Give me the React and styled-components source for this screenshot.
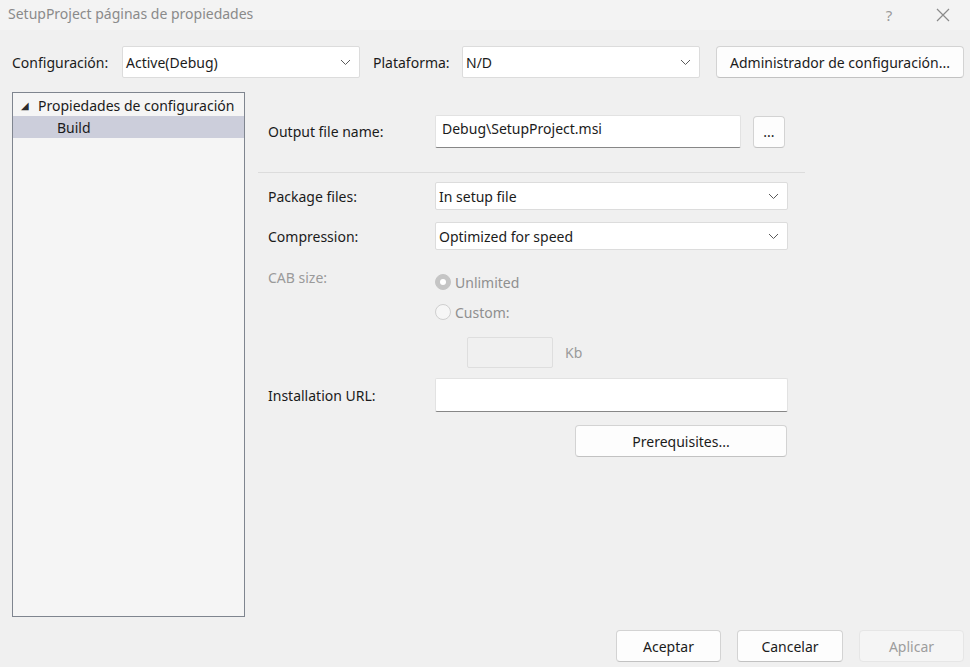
import React from "react";
import styled, { createGlobalStyle } from "styled-components";

const GlobalStyle = createGlobalStyle`
  html, body {
    margin: 0;
    padding: 0;
    background: #f0f0f0;
  }
  body {
    font-family: "Noto Sans", "Open Sans", sans-serif;
    font-size: 14px;
    color: #1b1b1b;
  }
`;

const Window = styled.div`
  width: 970px;
  height: 667px;
  display: flex;
  flex-direction: column;
  background: #f0f0f0;
  overflow: hidden;
`;

const TitleBar = styled.div`
  height: 30px;
  display: flex;
  align-items: center;
  padding: 0 0 0 8px;
  background: #f3f3f3;
`;

const Title = styled.div`
  flex: 1;
  color: #8a8a8a;
  font-size: 14px;
  padding-bottom: 3px;
`;

const TitleButton = styled.div`
  width: 54px;
  height: 30px;
  display: flex;
  align-items: center;
  justify-content: center;
  color: #9a9a9a;
  font-size: 15px;
`;

const Toolbar = styled.div`
  display: flex;
  align-items: center;
  padding: 16px 6px 0 12px;
  height: 32px;
`;

const ToolLabel = styled.span`
  width: ${(p) => p.$w}px;
  flex: none;
  white-space: nowrap;
`;

const SelectBox = styled.div`
  box-sizing: border-box;
  width: ${(p) => p.$w}px;
  height: ${(p) => p.$h || 32}px;
  background: #ffffff;
  border: 1px solid #dcdcdc;
  border-radius: 2px;
  display: flex;
  align-items: center;
  padding: 0 8px 0 3px;
  margin-right: ${(p) => p.$mr || 0}px;
  span {
    flex: 1;
    white-space: nowrap;
  }
`;

const Button = styled.div`
  box-sizing: border-box;
  width: ${(p) => p.$w}px;
  height: ${(p) => p.$h || 32}px;
  background: ${(p) => (p.$disabled ? "#f5f5f5" : "#fdfdfd")};
  color: ${(p) => (p.$disabled ? "#9d9d9d" : "#1b1b1b")};
  border: 1px solid ${(p) => (p.$disabled ? "#e6e6e6" : "#d3d3d3")};
  border-bottom-color: ${(p) => (p.$disabled ? "#e6e6e6" : "#c2c2c2")};
  border-radius: 4px;
  display: flex;
  align-items: center;
  justify-content: center;
  white-space: nowrap;
`;

const Main = styled.div`
  display: flex;
  margin: 14px 0 0 12px;
  height: 525px;
`;

const Tree = styled.div`
  box-sizing: border-box;
  width: 233px;
  height: 100%;
  background: #f5f5f5;
  border: 1px solid #7f858f;
  padding-top: 1px;
`;

const TreeItem = styled.div`
  height: 22px;
  display: flex;
  align-items: center;
  padding-left: ${(p) => p.$indent}px;
  background: ${(p) => (p.$selected ? "#cccedb" : "transparent")};
  font-size: 14px;
`;

const Arrow = styled.span`
  font-size: 10px;
  width: 17px;
  color: #2b2b2b;
`;

const Pages = styled.div`
  width: 547px;
  margin-left: 13px;
  padding-top: 23px;
`;

const Row = styled.div`
  display: grid;
  grid-template-columns: 167px 1fr;
  align-items: center;
  padding-left: 10px;
  margin-bottom: ${(p) => p.$mb || 0}px;
`;

const FieldLabel = styled.div`
  color: ${(p) => (p.$disabled ? "#9a9a9a" : "#1b1b1b")};
  align-self: ${(p) => (p.$top ? "start" : "center")};
  margin-top: ${(p) => (p.$top ? -4 : 0)}px;
`;

const Inline = styled.div`
  display: flex;
  align-items: center;
`;

const TextBox = styled.div`
  box-sizing: border-box;
  width: ${(p) => p.$w}px;
  height: ${(p) => p.$h}px;
  background: ${(p) => (p.$disabled ? "transparent" : "#ffffff")};
  border: 1px solid ${(p) => (p.$disabled ? "#dedede" : "#e2e2e2")};
  border-bottom: 1px solid ${(p) => (p.$disabled ? "#dedede" : "#878787")};
  border-radius: 2px;
  padding: 3px 6px;
  margin-right: ${(p) => p.$mr || 0}px;
  white-space: nowrap;
`;

const Separator = styled.div`
  height: 1px;
  background: #dcdcdc;
  margin: 24px 0 9px 0;
`;

const RadioGroup = styled.div`
  display: flex;
  flex-direction: column;
  gap: 10px;
`;

const Radio = styled.div`
  display: flex;
  align-items: center;
  color: #8f8f8f;
  height: 20px;
`;

const RadioDot = styled.span`
  box-sizing: border-box;
  width: 16px;
  height: 16px;
  border-radius: 50%;
  margin-right: 4px;
  background: ${(p) => (p.$checked ? "#c5c5c5" : "#f6f6f6")};
  border: 1px solid ${(p) => (p.$checked ? "#c5c5c5" : "#cfcfcf")};
  display: flex;
  align-items: center;
  justify-content: center;
  &::after {
    content: "";
    width: 6px;
    height: 6px;
    border-radius: 50%;
    background: ${(p) => (p.$checked ? "#ffffff" : "transparent")};
  }
`;

const SizeRow = styled.div`
  display: flex;
  align-items: center;
  padding-left: 32px;
  margin-top: 15px;
  color: #9a9a9a;
`;

const Footer = styled.div`
  display: flex;
  justify-content: flex-end;
  gap: 16px;
  padding: 13px 6px 0 0;
`;

const Chevron = () => (
  <svg width="11" height="7" viewBox="0 0 11 7">
    <path d="M1 1 L5.5 5.5 L10 1" fill="none" stroke="#5a5a5a" strokeWidth="1" />
  </svg>
);

const Close = () => (
  <svg width="14" height="14" viewBox="0 0 14 14">
    <path d="M1 1 L13 13 M13 1 L1 13" stroke="#8a8a8a" strokeWidth="1.2" />
  </svg>
);

const Dropdown = ({ value, w, h, mr }) => (
  <SelectBox $w={w} $h={h} $mr={mr}>
    <span>{value}</span>
    <Chevron />
  </SelectBox>
);

export default function App() {
  return (
    <Window>
      <GlobalStyle />
      <TitleBar>
        <Title>SetupProject páginas de propiedades</Title>
        <TitleButton>?</TitleButton>
        <TitleButton>
          <Close />
        </TitleButton>
      </TitleBar>

      <Toolbar>
        <ToolLabel $w={110}>Configuración:</ToolLabel>
        <Dropdown value="Active(Debug)" w={238} mr={13} />
        <ToolLabel $w={89}>Plataforma:</ToolLabel>
        <Dropdown value="N/D" w={238} mr={16} />
        <Button $w={248}>Administrador de configuración...</Button>
      </Toolbar>

      <Main>
        <Tree>
          <TreeItem $indent={8}>
            <Arrow>◢</Arrow>
            Propiedades de configuración
          </TreeItem>
          <TreeItem $indent={44} $selected>
            Build
          </TreeItem>
        </Tree>

        <Pages>
          <Row>
            <FieldLabel>Output file name:</FieldLabel>
            <Inline>
              <TextBox $w={306} $h={33} $mr={12}>
                Debug\SetupProject.msi
              </TextBox>
              <Button $w={32} $h={32}>...</Button>
            </Inline>
          </Row>

          <Separator />

          <Row $mb={12}>
            <FieldLabel>Package files:</FieldLabel>
            <Dropdown value="In setup file" w={353} h={28} />
          </Row>
          <Row $mb={22}>
            <FieldLabel>Compression:</FieldLabel>
            <Dropdown value="Optimized for speed" w={353} h={28} />
          </Row>

          <Row $mb={10}>
            <FieldLabel $disabled $top>CAB size:</FieldLabel>
            <div>
              <RadioGroup>
                <Radio>
                  <RadioDot $checked />
                  Unlimited
                </Radio>
                <Radio>
                  <RadioDot />
                  Custom:
                </Radio>
              </RadioGroup>
              <SizeRow>
                <TextBox $disabled $w={86} $h={31} $mr={12} />
                Kb
              </SizeRow>
            </div>
          </Row>

          <Row $mb={13}>
            <FieldLabel>Installation URL:</FieldLabel>
            <TextBox $w={353} $h={34} />
          </Row>

          <Row>
            <div />
            <Inline>
              <div style={{ flex: "0 0 140px" }} />
              <Button $w={212} $h={32}>Prerequisites...</Button>
            </Inline>
          </Row>
        </Pages>
      </Main>

      <Footer>
        <Button $w={105}>Aceptar</Button>
        <Button $w={106}>Cancelar</Button>
        <Button $w={105} $disabled>Aplicar</Button>
      </Footer>
    </Window>
  );
}
